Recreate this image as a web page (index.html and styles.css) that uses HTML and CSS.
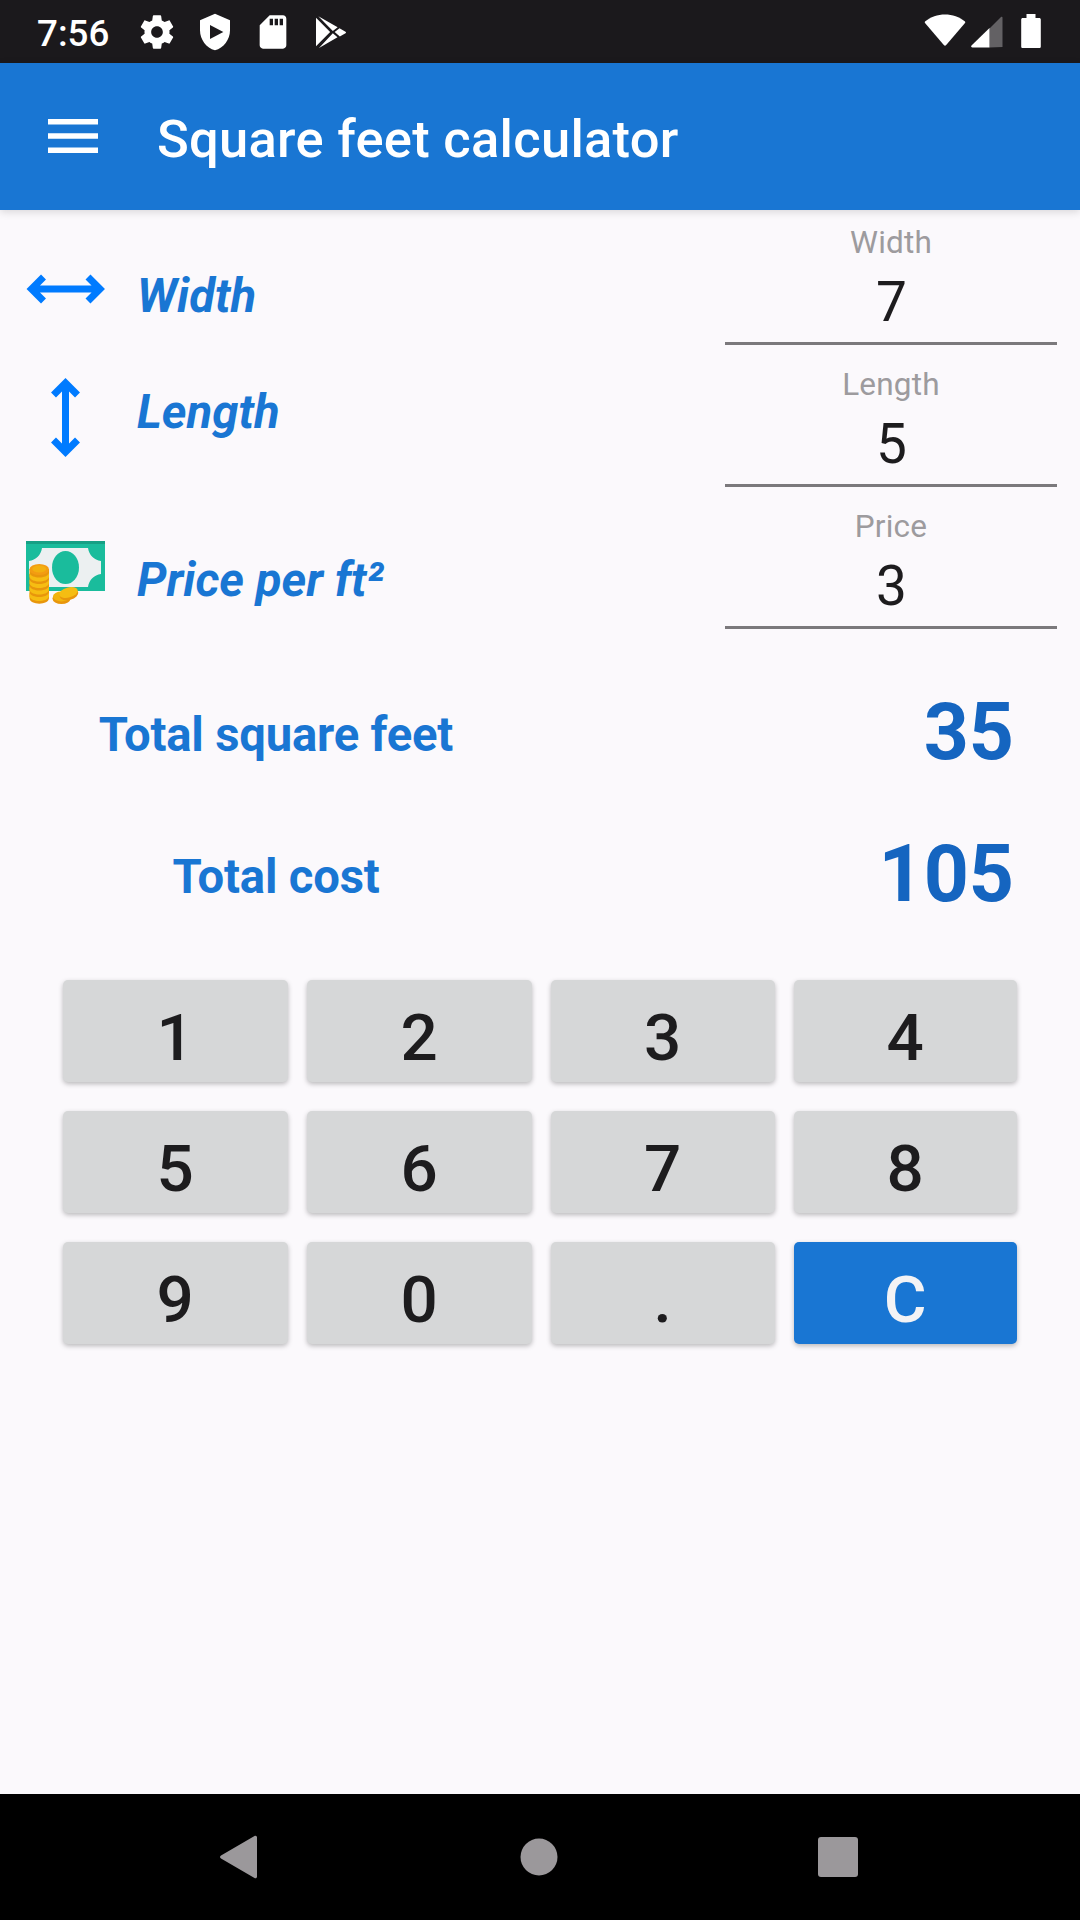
FILE: index.html
```html
<!DOCTYPE html>
<html lang="en">
<head>
    <meta charset="utf-8">
    <meta name="viewport" content="width=device-width, initial-scale=1.0">
    <title>Square feet calculator</title>
    <link rel="stylesheet" href="styles.css">
</head>
<body>
    <div class="status-bar">
        <span class="clock">7:56</span>
        <div class="status-icons">
            <svg viewBox="0 0 24 24"><path d="M19.43 12.98c.04-.32.07-.64.07-.98s-.03-.66-.07-.98l2.11-1.65c.19-.15.24-.42.12-.64l-2-3.46c-.12-.22-.39-.3-.61-.22l-2.49 1c-.52-.4-1.08-.73-1.69-.98l-.38-2.65C14.46 2.18 14.25 2 14 2h-4c-.25 0-.46.18-.49.42l-.38 2.65c-.61.25-1.17.59-1.69.98l-2.49-1c-.23-.09-.49 0-.61.22l-2 3.46c-.13.22-.07.49.12.64l2.11 1.65c-.04.32-.07.65-.07.98s.03.66.07.98l-2.11 1.65c-.19.15-.24.42-.12.64l2 3.46c.12.22.39.3.61.22l2.49-1c.52.4 1.08.73 1.69.98l.38 2.65c.03.24.24.42.49.42h4c.25 0 .46-.18.49-.42l.38-2.65c.61-.25 1.17-.59 1.69-.98l2.49 1c.23.09.49 0 .61-.22l2-3.46c.12-.22.07-.49-.12-.64l-2.11-1.65zM12 15.5c-1.93 0-3.5-1.57-3.5-3.5s1.57-3.5 3.5-3.5 3.5 1.57 3.5 3.5-1.57 3.5-3.5 3.5z"/></svg>
            <svg viewBox="0 0 24 24"><path fill-rule="evenodd" d="M12 1L3 5v6c0 5.55 3.84 10.74 9 12 5.16-1.26 9-6.45 9-12V5l-9-4zM9 7.8v8.4l8-4.2z"/></svg>
            <svg viewBox="0 0 24 24"><path d="M18 2h-8L4.02 8 4 20c0 1.1.9 2 2 2h12c1.1 0 2-.9 2-2V4c0-1.1-.9-2-2-2zm-6 6h-2V4h2v4zm3 0h-2V4h2v4zm3 0h-2V4h2v4z"/></svg>
            <svg viewBox="0 0 24 24"><path d="M3 3.4L11.500 12 3 20.600zM4.400 2.500L16 9.200l-2.900 2.200zM17.100 9.800l3.600 2.100c.4.2.4.7 0 .9l-3.400 1.900-3.100-2.700zM13.100 12.800l2.800 2.400L4.800 21.600z"/></svg>
        </div>
        <div class="system-icons">
            <svg class="wifi" viewBox="0 0 42 32"><path d="M1 7.5C12-2 30-2 41 7.5c.4.4.4 1 0 1.5L22 31.2c-.6.6-1.4.6-2 0L1 9c-.4-.5-.4-1.1 0-1.5z"/></svg>
            <svg class="signal" viewBox="0 0 32 32"><path class="dim" d="M18.500 31.500V12.500L30 1c.8-.7 1.500-.3 1.500.7v29.300z"/><path d="M18.500 12v19.500H1.500c-1.300 0-1.800-1-1-1.900z"/></svg>
            <svg class="battery" viewBox="0 0 20 34"><path d="M5.500 0h9v4h3.700c1 0 1.600.6 1.600 1.600v26.800c0 1-.6 1.600-1.600 1.600H1.800c-1 0-1.600-.6-1.600-1.600V5.600C.2 4.600.8 4 1.800 4h3.700z"/></svg>
        </div>
    </div>

    <div class="app-bar">
        <svg class="menu" viewBox="0 0 50 34"><path d="M0 0h50v5.400H0zM0 14.300h50v5.400H0zM0 28.600h50V34H0z"/></svg>
        <h1>Square feet calculator</h1>
    </div>

    <div class="content">
        <div class="form">
            <div class="labels">
                <div class="row row-width">
                    <svg class="icon" viewBox="0 0 80 80"><path class="arrow" d="M8 40h66M18.500 28L6.500 40l12 12M63 28l12 12-12 12"/></svg>
                    <span>Width</span>
                </div>
                <div class="row row-length">
                    <svg class="icon" viewBox="0 0 80 80"><path class="arrow" d="M40.500 7v66M28.500 17L40.500 5l12 12M28.500 62l12 12 12-12"/></svg>
                    <span>Length</span>
                </div>
                <div class="row row-price">
                    <svg class="icon" viewBox="0 0 80 80">
                        <rect x="1" y="8" width="79" height="50" fill="#1abc9c"/>
                        <rect x="1" y="8" width="79" height="3" fill="#16a085"/>
                        <path d="M17 15h46c1 7 6 12 13 13v13c-7 1-12 6-13 13H17c-1-7-6-12-13-13V28c7-1 12-6 13-13z" fill="#ecf0f1"/>
                        <ellipse cx="40.500" cy="34.500" rx="13.500" ry="16.500" fill="#1abc9c"/>
                        <!-- tall stack -->
                        <path d="M4.500 36v29c0 7.500 19.500 7.500 19.500 0V36z" fill="#e8960c"/>
                        <path d="M4.500 59.500c2 6 17.500 6 19.500 0v4c-2 6-17.500 6-19.500 0zM4.500 53c2 6 17.500 6 19.500 0v4c-2 6-17.500 6-19.500 0zM4.500 46.500c2 6 17.500 6 19.500 0v4c-2 6-17.500 6-19.500 0zM4.500 40c2 6 17.500 6 19.500 0v4c-2 6-17.500 6-19.500 0z" fill="#f6bd12"/>
                        <ellipse cx="14.250" cy="36.500" rx="9.750" ry="5.500" fill="#f39c12"/>
                        <ellipse cx="14.250" cy="36" rx="7" ry="3.500" fill="#f2b00f"/>
                        <!-- loose coins -->
                        <ellipse cx="36.500" cy="65.500" rx="9" ry="5.500" fill="#e8960c"/>
                        <ellipse cx="36.500" cy="63.500" rx="8.500" ry="5" fill="#f1b40f"/>
                        <ellipse cx="44" cy="61.500" rx="9.500" ry="5.500" transform="rotate(-15 44 61.500)" fill="#e8960c"/>
                        <ellipse cx="43.500" cy="59.500" rx="9.500" ry="5" transform="rotate(-15 43.500 59.500)" fill="#f5bd12"/>
                    </svg>
                    <span>Price per ft²</span>
                </div>
            </div>

            <div class="fields">
                <div class="field">
                    <div class="hint">Width</div>
                    <div class="value">7</div>
                </div>
                <div class="field">
                    <div class="hint">Length</div>
                    <div class="value">5</div>
                </div>
                <div class="field">
                    <div class="hint">Price</div>
                    <div class="value">3</div>
                </div>
            </div>
        </div>

        <div class="total">
            <span class="total-label">Total square feet</span>
            <span class="total-value">35</span>
        </div>
        <div class="total">
            <span class="total-label">Total cost</span>
            <span class="total-value">105</span>
        </div>

        <div class="keypad">
            <button>1</button>
            <button>2</button>
            <button>3</button>
            <button>4</button>
            <button>5</button>
            <button>6</button>
            <button>7</button>
            <button>8</button>
            <button>9</button>
            <button>0</button>
            <button>.</button>
            <button class="clear">C</button>
        </div>
    </div>

    <div class="nav-bar">
        <svg viewBox="0 0 42 42"><path d="M35.500 0c1.200-.8 2.500 0 2.500 1.500v39c0 1.500-1.300 2.300-2.500 1.500L2 22.500c-1.300-.8-1.300-2.200 0-3z"/></svg>
        <svg viewBox="0 0 42 42"><circle cx="21" cy="21" r="18.500"/></svg>
        <svg viewBox="0 0 42 42"><rect x="1" y="1" width="40" height="40" rx="3"/></svg>
    </div>
</body>
</html>
```

FILE: styles.css
```css
* {
    box-sizing: border-box;
}

body {
    margin: 0;
    height: 1920px;
    display: flex;
    flex-direction: column;
    font-family: Roboto, "Liberation Sans", sans-serif;
    background: #fbf9fc;
    color: #1d1c1e;
    overflow: hidden;
}

svg {
    display: block;
    flex: none;
    overflow: visible;
}

.status-bar {
    height: 63px;
    display: flex;
    align-items: center;
    padding: 0 38px 0 37px;
    background: #1b191c;
    color: #fff;
}

.status-bar svg {
    fill: #fff;
}

.clock {
    width: 100px;
    padding-top: 4px;
    font-size: 36.75px;
    font-weight: 500;
    line-height: 40px;
}

.status-icons {
    display: flex;
    gap: 18px;
}

.status-icons svg {
    width: 40px;
    height: 40px;
}

.system-icons {
    display: flex;
    align-items: center;
    margin-left: auto;
}

.wifi {
    width: 42px;
    height: 32px;
    margin-bottom: 3px;
}

.signal {
    width: 32px;
    height: 32px;
    margin-left: 5px;
}

.status-bar .dim {
    fill: #636164;
}

.battery {
    width: 20px;
    height: 34px;
    margin-left: 18px;
    margin-right: 1px;
    margin-bottom: 1px;
}

.app-bar {
    position: relative;
    height: 147px;
    display: flex;
    align-items: center;
    padding-left: 48px;
    background: #1976d3;
    color: #fff;
    box-shadow: 0 2px 8px rgba(0, 0, 0, 0.14);
}

.menu {
    width: 50px;
    height: 34px;
    margin-bottom: 1px;
    fill: #fff;
}

.app-bar h1 {
    margin: 4px 0 0 59px;
    font-size: 52.5px;
    font-weight: 500;
    line-height: 60px;
    letter-spacing: 0.28px;
}

.content {
    flex: 1;
}

.form {
    height: 453px;
    display: flex;
    justify-content: space-between;
    padding: 0 23px 0 25px;
}

.row {
    display: flex;
    align-items: center;
    gap: 32px;
    font-size: 47.25px;
    font-weight: 700;
    font-style: italic;
    line-height: 56px;
    color: #1976d3;
}

.icon {
    width: 80px;
    height: 80px;
}

.arrow {
    fill: none;
    stroke: #007bff;
    stroke-width: 7;
}

.row-width {
    height: 164px;
}

.row-width .icon {
    margin-bottom: 7px;
}

.row-width span {
    padding-top: 7px;
}

.row-length {
    height: 87px;
}

.row-length span {
    padding-bottom: 12px;
}

.row-price {
    height: 202px;
    padding-top: 28px;
}

.row-price .icon {
    margin-bottom: 6px;
}

.row-price span {
    padding-top: 7px;
}

.fields {
    width: 332px;
    display: flex;
    flex-direction: column;
    gap: 21px;
    padding-top: 14px;
}

.field {
    height: 121px;
    text-align: center;
    border-bottom: 3px solid #7b797c;
}

.hint {
    padding-top: 1px;
    font-size: 31.5px;
    line-height: 36px;
    letter-spacing: 0.2px;
    color: #9d9b9e;
}

.value {
    margin-top: 11px;
    font-size: 55px;
    line-height: 60px;
    padding-left: 1px;
}

.total {
    height: 142px;
    display: flex;
    align-items: center;
    justify-content: space-between;
    padding: 0 66px 0 63px;
}

.total-label {
    width: 426px;
    padding-top: 2px;
    text-align: center;
    font-size: 47.25px;
    font-weight: 700;
    letter-spacing: -0.2px;
    color: #1976d3;
}

.total-value {
    padding-bottom: 4px;
    font-size: 78.75px;
    font-weight: 700;
    color: #1565c0;
}

.keypad {
    display: grid;
    grid-template-columns: 225px 225px 224px 223px;
    grid-auto-rows: 102px;
    gap: 29px 19px;
    padding: 33px 0 0 62.6px;
}

.keypad button {
    padding: 13px 0 0;
    border: 0;
    border-radius: 5px;
    background: #d6d7d8;
    color: #1d1c1e;
    font-family: inherit;
    font-size: 65.6px;
    font-weight: 500;
    line-height: 76px;
    box-shadow: 0 2px 5px rgba(0, 0, 0, 0.26);
}

.keypad .clear {
    background: #1976d3;
    color: #f3f3f5;
}

.nav-bar {
    height: 126px;
    display: flex;
    align-items: center;
    justify-content: center;
    gap: 257px;
    padding-right: 2px;
    background: #000;
}

.nav-bar svg {
    width: 42px;
    height: 42px;
    fill: #9b989b;
}
```
